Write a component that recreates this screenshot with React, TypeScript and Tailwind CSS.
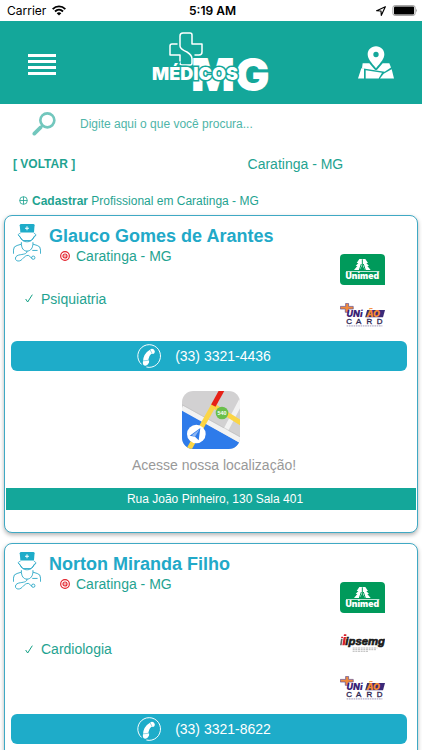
type Plan = 'unimed' | 'ipsemg' | 'uniao';

interface Doctor {
  name: string;
  city: string;
  specialty: string;
  phone: string;
  plans: Plan[];
  address?: string;
}

const doctors: Doctor[] = [
  {
    name: 'Glauco Gomes de Arantes',
    city: 'Caratinga - MG',
    specialty: 'Psiquiatria',
    phone: '(33) 3321-4436',
    plans: ['unimed', 'uniao'],
    address: 'Rua João Pinheiro, 130 Sala 401',
  },
  {
    name: 'Norton Miranda Filho',
    city: 'Caratinga - MG',
    specialty: 'Cardiologia',
    phone: '(33) 3321-8622',
    plans: ['unimed', 'ipsemg', 'uniao'],
  },
];

function StatusBar() {
  return (
    <div className="grid h-[21px] shrink-0 grid-cols-3 items-center pr-1 pl-[7px] font-['Inter',sans-serif] text-xs text-black">
      <div className="flex items-center gap-1.5">
        <span>Carrier</span>
        <svg viewBox="0 0 42 32" className="h-[11px] w-3.5" fill="none" stroke="#000" strokeWidth="5.5">
          <path d="M2 12C13 1 29 1 40 12" />
          <path d="M9 19C16 12 26 12 33 19" />
          <path d="M21 31L14 24Q21 18 28 24Z" fill="#000" stroke="none" />
        </svg>
      </div>
      <span className="justify-self-center font-semibold">5:19 AM</span>
      <div className="flex items-center gap-1.5 justify-self-end">
        <svg viewBox="0 0 30 30" className="size-2.5" fill="none" stroke="#000" strokeWidth="3.5">
          <path d="M28 2L2 14L15 15L16 28Z" strokeLinejoin="round" />
        </svg>
        <svg viewBox="0 0 78 34" className="h-[11px] w-[26px]">
          <rect x="1.5" y="1.5" width="69" height="31" rx="7" fill="none" stroke="#8e8e8e" strokeWidth="2.5" />
          <rect x="5" y="5" width="62" height="24" rx="3" />
          <path d="M73 11Q78 17 73 23Z" fill="#8e8e8e" />
        </svg>
      </div>
    </div>
  );
}

function Logo() {
  return (
    <svg viewBox="0 0 118 62" className="h-[62px] w-[118px] overflow-visible" role="img" aria-label="Médicos MG">
      <path
        d="M25 12H20Q18 12 18 14V23H28V31Q28 33 30 33H38Q40 33 40 31V27Q40 23 35 20Q28 17 28 14V4Q28 1 31 1H38Q40 1 40 3V12H50V20Q50 23 47 23H43"
        fill="none"
        stroke="#fff"
        strokeWidth="1.5"
        strokeLinejoin="round"
        strokeLinecap="round"
      />
      <g fontFamily="Inter, sans-serif" fontWeight="900" fill="#fff">
        <g fontSize="46">
          <text x="39" y="59">M</text>
          <text x="83" y="59">G</text>
        </g>
        <text x="0" y="48" fontSize="18" stroke="#14a79a" strokeWidth="3" paintOrder="stroke">
          MÉDICOS
        </text>
      </g>
    </svg>
  );
}

function MapIcon() {
  return (
    <svg viewBox="0 0 108 98" className="h-[33px] w-9" fill="#fff">
      <path
        fillRule="evenodd"
        d="M54 0C39 0 29 11 29 24C29 37 39 48 54 66C69 48 79 37 79 24C79 11 69 0 54 0ZM54 17A8 8 0 1 1 54 33A8 8 0 1 1 54 17Z"
      />
      <path d="M14 51H34L50 70Q54 73 58 70L74 51H94L99 64L80 77L12 66Z" />
      <path d="M10 66H18V97H0Z" />
      <path d="M23 72L72 80L62 97H23Z" />
      <path d="M101 69L108 97H66L77 83Z" />
    </svg>
  );
}

function Header() {
  return (
    <header className="grid h-[83px] shrink-0 grid-cols-3 items-center bg-[#14a79a] px-7">
      <button type="button" aria-label="Menu" className="flex w-7 flex-col gap-[3px] pt-1">
        <span className="h-[3px] bg-white" />
        <span className="h-[3px] bg-white" />
        <span className="h-[3px] bg-white" />
        <span className="h-[3px] bg-white" />
      </button>
      <a href="#inicio" className="justify-self-center">
        <Logo />
      </a>
      <button type="button" aria-label="Mapa" className="justify-self-end">
        <MapIcon />
      </button>
    </header>
  );
}

function DoctorIcon() {
  return (
    <svg viewBox="0 0 84 115" className="h-[38px] w-7 shrink-0" fill="none" stroke="#2fa9c8" strokeWidth="2.8">
      <path d="M25 0H61Q65 0 65 4L63 26H22L20 4Q20 0 25 0Z" fill="#1eacc9" stroke="none" />
      <path d="M42 7V19M36 13H48" stroke="#fff" strokeWidth="3" />
      <path d="M22 28C13 30 15 35 21 38C23 49 33 54 42 54C51 54 61 49 63 38C70 35 70 30 63 28" />
      <path d="M16 34L30 50H54L69 34" />
      <path d="M25 55C24 74 32 82 42 82C52 82 61 74 60 55" />
      <path d="M1 90V79Q1 67 12 65L25 61M60 61L73 65Q83 67 83 79V90M58 80H74" />
      <path d="M42 82C42 92 30 91 17 94C4 97 4 111 15 112C29 113 32 94 46 95C52 96 51 103 57 103" />
      <circle cx="61" cy="102" r="5" />
    </svg>
  );
}

function TargetIcon() {
  return (
    <svg viewBox="0 0 30 30" className="size-2.5" fill="none" stroke="#e3222c" strokeWidth="3.5">
      <circle cx="15" cy="15" r="13" />
      <circle cx="15" cy="15" r="6" />
      <circle cx="15" cy="15" r="2" fill="#e3222c" stroke="none" />
    </svg>
  );
}

function PhoneIcon() {
  return (
    <svg viewBox="0 0 74 74" className="size-6">
      <path d="M14 63A35 35 0 1 1 29 71" fill="none" stroke="#fff" strokeWidth="3" />
      <path
        d="M41 17Q46 13 52 17Q57 22 54 28Q50 33 44 30Q37 36 35 48Q39 51 37 58Q33 66 26 67Q18 67 18 57Q18 30 41 17Z"
        fill="#fff"
      />
      <path d="M18 52L37 50M40 17L47 30" stroke="#1eacc9" strokeWidth="1.5" />
    </svg>
  );
}

function RouteIcon() {
  return (
    <svg viewBox="0 0 174 174" className="size-[58px]">
      <clipPath id="route-tile">
        <rect width="174" height="174" rx="34" />
      </clipPath>
      <g clipPath="url(#route-tile)">
        <rect width="174" height="174" fill="#d2d1d2" />
        <path d="M0 56L174 156V174H0Z" fill="#2e7bea" />
        <path d="M0 51L174 147M178 28L132 116" stroke="#f2f2f2" strokeWidth="15" />
        <path d="M0 41L174 137" stroke="#b9b9b9" strokeWidth="1.5" />
        <path d="M18 180L94 44L180 98" fill="none" stroke="#fbd545" strokeWidth="15" />
        <path d="M94 44L121 -5" stroke="#e62117" strokeWidth="15" />
        <circle cx="120" cy="66" r="19" fill="#6abf4b" />
        <text x="120" y="72" textAnchor="middle" fontFamily="Liberation Sans, sans-serif" fontWeight="700" fontSize="16" fill="#fff">
          540
        </text>
        <circle cx="43" cy="129" r="28" fill="#fff" />
        <path d="M55 111L23 134L39 137L50 148Z" fill="#2e7bea" />
        <path d="M53 115L39 137L29 133Z" fill="#fff" fillOpacity="0.45" />
      </g>
    </svg>
  );
}

function UnimedLogo() {
  return (
    <svg viewBox="0 0 135 93" className="h-[31px] w-[45px]" role="img" aria-label="Unimed">
      <path d="M12 0H123Q135 0 135 12V93H12Q0 93 0 81V12Q0 0 12 0Z" fill="#009a5b" />
      <g fill="#fff">
        <path d="M58 15H76L84 27H79L87 36H82L92 48H75L67 34L59 48H42L52 36H47L55 27H50Z" />
        <path d="M18 52H118V54H18Z" />
        <text x="67" y="76" textAnchor="middle" fontFamily="Inter, sans-serif" fontWeight="900" fontSize="26">
          Unimed
        </text>
      </g>
      <path d="M67 16V48M58 48L64 30M76 48L70 30" stroke="#009a5b" strokeWidth="3" />
    </svg>
  );
}

function UniaoLogo() {
  return (
    <svg viewBox="0 0 136 72" className="h-6 w-[45px]" role="img" aria-label="União Card">
      <path d="M82 21H136L130 43H76Z" fill="#3b2a78" />
      <path d="M17 1H26V10H40V18H26V28H16V18H1V10H17Z" fill="#f08a3c" stroke="#5b4a8f" strokeWidth="2" />
      <g fontFamily="Inter, sans-serif" fontWeight="900" fontStyle="italic" fontSize="27">
        <text x="20" y="42" fill="#3b2477">UNi</text>
        <text x="80" y="42" fill="#f58a33">ÃO</text>
      </g>
      <text
        x="19 48 80 111"
        y="64"
        fontFamily="Liberation Sans, sans-serif"
        fontSize="24"
        fill="#2c2350"
        stroke="#2c2350"
      >
        CARD
      </text>
      <path d="M20 69H128" stroke="#8d84ad" strokeWidth="2.5" strokeDasharray="5 2" />
    </svg>
  );
}

function IpsemgLogo() {
  return (
    <svg viewBox="0 0 135 54" className="h-[18px] w-[45px]" role="img" aria-label="Ipsemg">
      <path d="M3 14H8L5 34H0Z" fill="#666" />
      <path d="M11 9H18L14 34H7Z" fill="#d51f2c" />
      <path d="M4 8H9V12H3ZM12 1H19V6H11Z" fill="#d51f2c" />
      <text
        x="16"
        y="34"
        fontFamily="Liberation Sans, sans-serif"
        fontWeight="700"
        fontStyle="italic"
        fontSize="34"
        fill="#1a1a1a"
        stroke="#1a1a1a"
        strokeWidth="2"
      >
        ipsemg
      </text>
      <path d="M38 42H112M38 47H110M38 52H84" stroke="#999" strokeWidth="2" strokeDasharray="6 2" />
    </svg>
  );
}

const planLogos: Record<Plan, React.ReactNode> = {
  unimed: <UnimedLogo />,
  ipsemg: <IpsemgLogo />,
  uniao: <UniaoLogo />,
};

function DoctorCard({ doctor }: { doctor: Doctor }) {
  return (
    <article className="rounded-lg border border-[#3fa9c4] bg-white pb-[22px] shadow-[0_2px_4px_rgba(0,0,0,0.3)]">
      <div className="flex">
        <div className="flex flex-1 flex-col pb-1">
          <div className="flex gap-2 pt-2 pl-2">
            <DoctorIcon />
            <div>
              <h2 className="text-lg leading-6 font-bold text-[#22a9c8]">{doctor.name}</h2>
              <p className="flex items-center gap-1.5 pl-[11px] text-sm leading-4">
                <TargetIcon />
                {doctor.city}
              </p>
            </div>
          </div>
          <div className="flex flex-1 items-center gap-2 pl-5 text-sm">
            <svg viewBox="0 0 24 27" className="h-[9px] w-2" fill="none" stroke="#14a085" strokeWidth="3">
              <path d="M2 15L8 24L22 2" />
            </svg>
            {doctor.specialty}
          </div>
        </div>
        <div className="flex flex-col pt-[31px] pr-8">
          {doctor.plans.map((plan) => (
            <div key={plan} className="flex h-[45px] items-center">
              {planLogos[plan]}
            </div>
          ))}
        </div>
      </div>

      <a
        href={`tel:${doctor.phone}`}
        className="mt-1 mr-2.5 ml-1.5 flex h-[30px] items-center justify-center gap-3.5 rounded-md bg-[#1eacc9] pr-2.5 text-sm text-white"
      >
        <PhoneIcon />
        {doctor.phone}
      </a>

      {doctor.address && (
        <>
          <a href="#mapa" className="flex flex-col items-center gap-1.5 pt-5 pb-[13px] text-sm text-[#999]">
            <RouteIcon />
            <span className="pl-1.5">Acesse nossa localização!</span>
          </a>
          <p className="mx-px bg-[#14a79a] pl-2 text-center text-xs leading-[22px] text-white">{doctor.address}</p>
        </>
      )}
    </article>
  );
}

export default function App() {
  return (
    <div className="flex h-screen flex-col overflow-hidden bg-white font-['Liberation_Sans',Arial,sans-serif] text-[#1fa391]">
      <StatusBar />
      <Header />

      <main className="flex-1 overflow-y-auto [scrollbar-width:none]">
        <form className="flex h-10 items-center gap-6 pl-8">
          <label htmlFor="busca" aria-label="Buscar">
            <svg viewBox="0 0 72 72" className="size-6" fill="none" stroke="#72c7bd">
              <circle cx="46" cy="25" r="21" strokeWidth="8" />
              <path d="M31 41L24 48" strokeWidth="6" />
              <path d="M26 46L7 65" strokeWidth="11" strokeLinecap="round" />
            </svg>
          </label>
          <input
            id="busca"
            type="search"
            placeholder="Digite aqui o que você procura..."
            className="min-w-0 flex-1 text-xs outline-none placeholder:text-[#4fb5a8]"
          />
        </form>

        <div className="grid h-10 grid-cols-[2fr_3fr] items-center">
          <a href="#voltar" className="pl-[13px] text-xs font-bold">
            [ VOLTAR ]
          </a>
          <p className="text-center text-sm">Caratinga - MG</p>
        </div>

        <a href="#cadastrar" className="flex h-[31px] items-center gap-1 pt-1.5 pb-1 pl-[19px] text-xs">
          <svg viewBox="0 0 27 27" className="size-[9px]" fill="none" stroke="#1fa391" strokeWidth="2.5">
            <circle cx="13.5" cy="13.5" r="11.5" />
            <path d="M13.5 2V25M2 13.5H25" />
          </svg>
          <span>
            <b>Cadastrar</b> Profissional em Caratinga - MG
          </span>
        </a>

        <div className="flex flex-col gap-2.5 pr-1 pb-3 pl-1">
          {doctors.map((doctor) => (
            <DoctorCard key={doctor.name} doctor={doctor} />
          ))}
        </div>
      </main>
    </div>
  );
}
